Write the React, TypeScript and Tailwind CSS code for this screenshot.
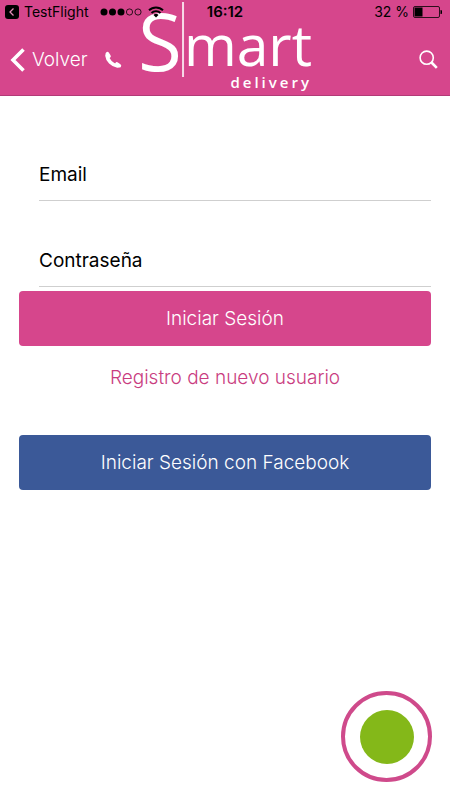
import React, { useState } from "react";

const StatusBar = () => (
  <div className="relative z-20 flex h-6 items-center justify-between pl-[5px] pr-2 text-sm text-black">
    <div className="flex items-center">
      <svg width="14" height="14" viewBox="0 0 14 14">
        <rect width="14" height="14" rx="3" fill="#000" />
        <path d="M8.5 3.5 5 7l3.5 3.5" fill="none" stroke="#e58bb8" strokeWidth="1.3" />
      </svg>
      <span className="ml-[5px]">TestFlight</span>
      <svg className="ml-[11px]" width="42" height="8" viewBox="0 0 42 8">
        <circle cx="4" cy="4" r="3.5" />
        <circle cx="12.5" cy="4" r="3.5" />
        <circle cx="21" cy="4" r="3.5" />
        <circle cx="29.5" cy="4" r="3.1" fill="none" stroke="#000" strokeWidth="0.8" />
        <circle cx="38" cy="4" r="3.1" fill="none" stroke="#000" strokeWidth="0.8" />
      </svg>
      <svg className="ml-[6px]" width="16" height="12" viewBox="0 0 16 12">
        <g fill="none" stroke="#000" strokeWidth="1.9">
          <path d="M1 4.3a10 10 0 0 1 14 0" />
          <path d="M3.5 7a6.4 6.4 0 0 1 9 0" />
        </g>
        <path d="M8 11.5 5.5 9a3.5 3.5 0 0 1 5 0z" />
      </svg>
    </div>
    <span className="absolute left-1/2 -translate-x-1/2 text-[15px] font-semibold">16:12</span>
    <div className="flex items-center gap-1">
      <span>32 %</span>
      <svg width="29" height="12" viewBox="0 0 29 12">
        <rect x="0.5" y="0.5" width="26" height="11" rx="1.5" fill="none" stroke="#000" strokeWidth="0.8" />
        <rect x="1.5" y="1.5" width="8" height="9" />
        <path d="M27.5 4a2 2 0 0 1 0 4z" />
      </svg>
    </div>
  </div>
);

const Logo = () => (
  <div className="pointer-events-none absolute left-1/2 top-0 z-10 flex -translate-x-1/2 font-['Open_Sans',sans-serif] text-white">
    <span className="text-[80px] leading-[80px]">S</span>
    <span className="mt-[2px] h-[75px] w-[2px] bg-white/80" />
    <div className="flex flex-col items-end">
      <span className="mt-[16px] text-[57px] leading-[57px]">mart</span>
      <span className="mt-[1px] text-[15px] leading-4 font-semibold tracking-[3px]">delivery</span>
    </div>
  </div>
);

const Header = () => (
  <header className="relative border-b border-[#b23a77] bg-[#d6468c]">
    <StatusBar />
    <Logo />
    <nav className="flex h-[71px] items-center justify-between pl-[10px] pr-3 text-white">
      <div className="flex items-center">
        <button className="flex items-center gap-[7px] text-[19px] font-light">
          <svg width="15" height="24" viewBox="0 0 15 24">
            <path d="M13.5 1.5 3 12l10.5 10.5" fill="none" stroke="#fff" strokeWidth="3.6" />
          </svg>
          <span className="pt-[2px]">Volver</span>
        </button>
        <button aria-label="Llamar" className="ml-4">
          <svg width="18" height="18" viewBox="0 0 18 18" fill="none" stroke="#fff" strokeLinecap="round">
            <path d="M3 4.5C3.5 9.5 8 14.2 13.5 15" strokeWidth="3.6" />
            <path d="M3.4 2.7 5 5.2M12.9 13l2.5 1.7" strokeWidth="3.6" />
          </svg>
        </button>
      </div>
      <button aria-label="Buscar">
        <svg width="19" height="19" viewBox="0 0 19 19" fill="none" stroke="#fff">
          <circle cx="7.7" cy="7.7" r="6.6" strokeWidth="1.6" />
          <path d="m12.5 12.5 5.3 5.3" strokeWidth="2.6" />
        </svg>
      </button>
    </nav>
  </header>
);

type FieldProps = {
  id: string;
  label: string;
  type: string;
  value: string;
  onChange: (value: string) => void;
};

const Field = ({ id, label, type, value, onChange }: FieldProps) => (
  <div className="ml-5 flex h-[53px] items-center border-b border-[#cfcfcf] pt-[2px]">
    <label htmlFor={id} className="text-black">
      {label}
    </label>
    <input
      id={id}
      type={type}
      value={value}
      onChange={(e) => onChange(e.target.value)}
      className="ml-4 h-full min-w-0 flex-1 bg-transparent outline-none"
    />
  </div>
);

const App = () => {
  const [email, setEmail] = useState("");
  const [password, setPassword] = useState("");

  return (
    <div className="flex min-h-screen flex-col bg-white font-['Inter',sans-serif]">
      <Header />
      <main className="flex-1 px-[19px] pt-[52px]">
        <form className="flex flex-col text-[19px]" onSubmit={(e) => e.preventDefault()}>
          <div className="flex flex-col gap-[33px]">
            <Field id="email" label="Email" type="email" value={email} onChange={setEmail} />
            <Field id="password" label="Contraseña" type="password" value={password} onChange={setPassword} />
          </div>
          <button type="submit" className="mt-1 h-[55px] rounded-[4px] bg-[#d6468c] pt-[2px] font-light text-white">
            Iniciar Sesión
          </button>
          <a href="#registro" className="mt-4 self-center leading-8 font-light text-[#c93c80]">
            Registro de nuevo usuario
          </a>
          <button type="button" className="mt-[41px] h-[55px] rounded-[4px] bg-[#3b5998] pt-[2px] font-light text-white">
            Iniciar Sesión con Facebook
          </button>
        </form>
      </main>
      <button
        aria-label="Menú"
        className="mr-[18px] mb-[18px] flex size-[91px] items-center justify-center self-end rounded-full border-4 border-[#cf4a8b] bg-white"
      >
        <span className="size-[54px] rounded-full bg-[#84b819]" />
      </button>
    </div>
  );
};

export default App;
